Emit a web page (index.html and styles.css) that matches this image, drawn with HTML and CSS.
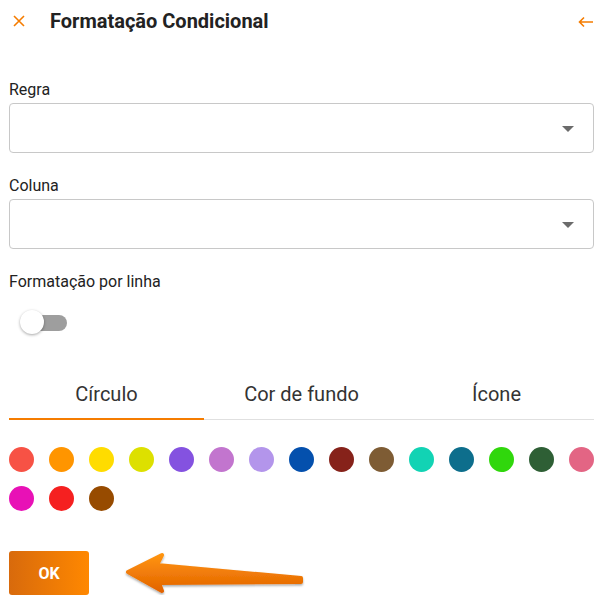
FILE: index.html
```html
<!DOCTYPE html>
<html lang="pt">

<head>
    <meta charset="UTF-8">
    <meta name="viewport" content="width=device-width, initial-scale=1.0">
    <title>Formatação Condicional</title>
    <link rel="stylesheet" href="styles.css">
</head>

<body>
    <header class="panel-header">
        <button class="icon-btn close-btn" aria-label="Fechar">
            <svg width="14" height="14" viewBox="0 0 14 14">
                <path d="M2 2 L12 12 M12 2 L2 12" stroke="#f57c00" stroke-width="1.6" fill="none" />
            </svg>
        </button>
        <h1 class="panel-title">Formatação Condicional</h1>
        <button class="icon-btn back-btn" aria-label="Voltar">
            <svg width="16" height="12" viewBox="0 0 16 12">
                <path d="M15 6 H2 M6 1.5 L1.5 6 L6 10.5" stroke="#f57c00" stroke-width="1.6" fill="none" />
            </svg>
        </button>
    </header>

    <main class="panel-body">
        <div class="field">
            <label class="field-label">Regra</label>
            <div class="select-box"><span class="caret"></span></div>
        </div>

        <div class="field">
            <label class="field-label">Coluna</label>
            <div class="select-box"><span class="caret"></span></div>
        </div>

        <div class="field">
            <label class="field-label">Formatação por linha</label>
            <div class="toggle">
                <span class="toggle-track"></span>
                <span class="toggle-knob"></span>
            </div>
        </div>

        <nav class="tabs">
            <div class="tab active">Círculo</div>
            <div class="tab">Cor de fundo</div>
            <div class="tab">Ícone</div>
        </nav>

        <div class="swatches">
            <span class="swatch c1"></span>
            <span class="swatch c2"></span>
            <span class="swatch c3"></span>
            <span class="swatch c4"></span>
            <span class="swatch c5"></span>
            <span class="swatch c6"></span>
            <span class="swatch c7"></span>
            <span class="swatch c8"></span>
            <span class="swatch c9"></span>
            <span class="swatch c10"></span>
            <span class="swatch c11"></span>
            <span class="swatch c12"></span>
            <span class="swatch c13"></span>
            <span class="swatch c14"></span>
            <span class="swatch c15"></span>
            <span class="swatch c16"></span>
            <span class="swatch c17"></span>
            <span class="swatch c18"></span>
        </div>

        <div class="actions">
            <button class="ok-btn">OK</button>
            <!-- annotation arrow pointing at the button -->
            <svg class="pointer-arrow" width="190" height="56" viewBox="0 0 190 56">
                <defs>
                    <linearGradient id="arrowFill" x1="0" y1="0" x2="0" y2="1">
                        <stop offset="0" stop-color="#ff9410" />
                        <stop offset="1" stop-color="#e36400" />
                    </linearGradient>
                    <filter id="arrowShadow" x="-10%" y="-30%" width="120%" height="160%">
                        <feDropShadow dx="0" dy="1.5" stdDeviation="1.2" flood-color="#000" flood-opacity="0.35" />
                    </filter>
                </defs>
                <path d="M8 27 L42 10 L37 20 L181 33 L181 37 L39 38 L42 46 Z" fill="url(#arrowFill)"
                    stroke="url(#arrowFill)" stroke-width="4" stroke-linejoin="round" filter="url(#arrowShadow)" />
            </svg>
        </div>
    </main>
</body>

</html>
```

FILE: styles.css
```css
/* General Styles */
body {
    font-family: Roboto, "Liberation Sans", sans-serif;
    background-color: #fff;
    color: #222;
    margin: 0;
}

/* Header */
.panel-header {
    display: flex;
    align-items: center;
    height: 42px;
    padding: 0 15px 0 12px;
}

.icon-btn {
    background: none;
    border: none;
    padding: 0;
    display: flex;
    align-items: center;
    cursor: pointer;
}

.panel-title {
    flex: 1;
    margin: 0 0 0 24px;
    font-size: 20px;
    font-weight: bold;
    color: #222;
}

.back-btn {
    margin-top: 1px;
}

/* Form */
.panel-body {
    padding: 38px 15px 0 9px;
}

.field {
    margin-bottom: 23px;
}

.field-label {
    display: block;
    font-size: 16px;
    line-height: 20px;
    margin-bottom: 3px;
    color: #222;
}

.select-box {
    position: relative;
    height: 48px;
    border: 1px solid #c8c8c8;
    border-radius: 4px;
}

.caret {
    position: absolute;
    right: 19px;
    top: 22px;
    width: 0;
    height: 0;
    border-left: 6px solid transparent;
    border-right: 6px solid transparent;
    border-top: 6px solid #6b6b6b;
}

/* Toggle */
.toggle {
    position: relative;
    width: 60px;
    height: 25px;
    margin: 18px 0 0 11px;
}

.toggle-track {
    position: absolute;
    left: 4px;
    top: 5px;
    width: 43px;
    height: 16px;
    border-radius: 8px;
    background: #9e9e9e;
}

.toggle-knob {
    position: absolute;
    left: 0;
    top: 0;
    width: 24px;
    height: 24px;
    border-radius: 50%;
    background: #fff;
    box-shadow: 0 1px 3px rgba(0, 0, 0, 0.35);
}

/* Tabs */
.tabs {
    display: flex;
    margin-top: 35px;
    border-bottom: 1px solid #e0e0e0;
}

.tab {
    flex: 1;
    text-align: center;
    font-size: 20px;
    line-height: 48px;
    color: #333;
    border-bottom: 2px solid transparent;
    margin-bottom: -1px;
}

.tab.active {
    border-bottom-color: #f57c00;
}

/* Colour swatches */
.swatches {
    display: grid;
    grid-template-columns: repeat(15, 25px);
    column-gap: 15px;
    row-gap: 14px;
    margin-top: 27px;
}

.swatch {
    width: 25px;
    height: 25px;
    border-radius: 50%;
}

.c1 { background: #f75245; }
.c2 { background: #ff9500; }
.c3 { background: #ffdc00; }
.c4 { background: #dde000; }
.c5 { background: #8452e0; }
.c6 { background: #c275ce; }
.c7 { background: #b395eb; }
.c8 { background: #0450ad; }
.c9 { background: #86221a; }
.c10 { background: #7e5c34; }
.c11 { background: #12d3b4; }
.c12 { background: #0d6e8c; }
.c13 { background: #30d70c; }
.c14 { background: #2e5f35; }
.c15 { background: #e36584; }
.c16 { background: #e811b6; }
.c17 { background: #f52020; }
.c18 { background: #974b00; }

/* Actions */
.actions {
    position: relative;
    margin-top: 40px;
}

.ok-btn {
    width: 80px;
    height: 44px;
    border: none;
    border-radius: 3px;
    background: linear-gradient(to right, #d86a0c, #ff8800);
    color: #fff;
    font-family: Roboto, "Liberation Sans", sans-serif;
    font-size: 16px;
    font-weight: bold;
    cursor: pointer;
}

.pointer-arrow {
    position: absolute;
    left: 111px;
    top: -6px;
}
```
